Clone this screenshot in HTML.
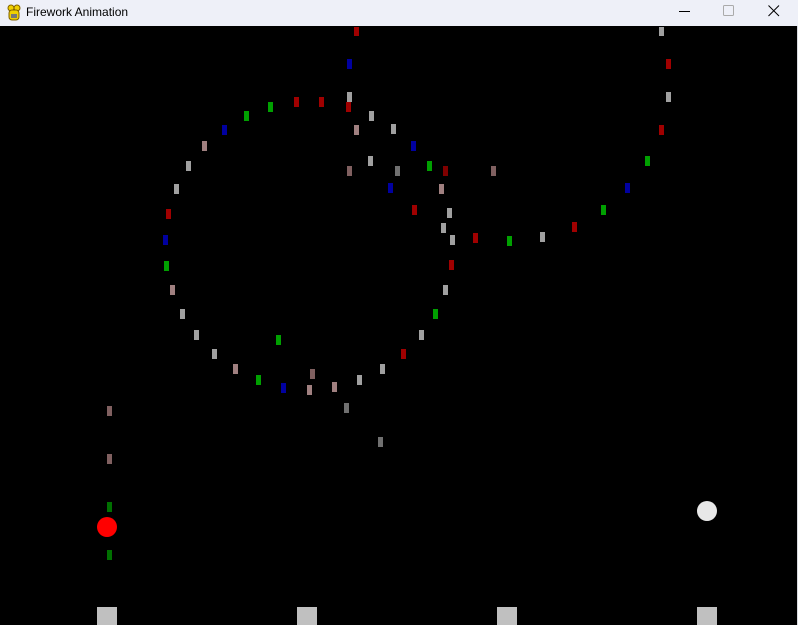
<!DOCTYPE html>
<html><head><meta charset="utf-8"><style>
*{margin:0;padding:0;box-sizing:border-box}
body{width:798px;height:625px;overflow:hidden;background:#000;position:relative;font-family:"Segoe UI","Liberation Sans",sans-serif}
#tb{position:absolute;left:0;top:0;width:798px;height:26px;background:#eef0f8}
#tb .t{position:absolute;left:26px;top:5px;font-size:12px;color:#000}
#cv{position:absolute;left:0;top:26px;width:797px;height:599px;background:#000}
#edge{position:absolute;left:797px;top:26px;width:1px;height:599px;background:#d8dae0}
p{position:absolute;width:5px;height:10px}
.r{background:#a00000}.g{background:#00a000}.b{background:#0000a0}.y{background:#a0a0a0}.k{background:#a08080}.d{background:#707070}.m{background:#806060}
.sq{position:absolute;top:607px;width:20px;height:18px;background:#c0c0c0}
</style></head><body>
<div id="tb">
<svg style="position:absolute;left:6px;top:4px" width="16" height="18" viewBox="0 0 16 18"><circle cx="5" cy="4" r="3" fill="#f0d000" stroke="#806000" stroke-width="1"/><circle cx="11" cy="4" r="3" fill="#f0d000" stroke="#806000" stroke-width="1"/><rect x="3" y="6" width="10" height="10" rx="3" fill="#f0d000" stroke="#806000"/><rect x="5" y="10" width="6" height="4" fill="#777"/></svg>
<span class="t">Firework Animation</span>
<svg style="position:absolute;left:679px;top:5px" width="12" height="12"><line x1="0" y1="6.5" x2="11" y2="6.5" stroke="#000"/></svg>
<svg style="position:absolute;left:723px;top:5px" width="12" height="12"><rect x="0.5" y="0.5" width="10" height="10" rx="1" fill="none" stroke="#aaa"/></svg>
<svg style="position:absolute;left:768px;top:5px" width="12" height="12"><path d="M0.5 0.5L11 11M11 0.5L0.5 11" stroke="#000"/></svg>
</div>
<div id="cv"></div><div id="edge"></div>
<p class="r" style="left:354px;top:27px;height:9px"></p>
<p class="b" style="left:347px;top:59px"></p>
<p class="y" style="left:347px;top:92px"></p>
<p class="r" style="left:346px;top:102px"></p>
<p class="r" style="left:319px;top:97px"></p>
<p class="r" style="left:294px;top:97px"></p>
<p class="g" style="left:268px;top:102px"></p>
<p class="g" style="left:244px;top:111px"></p>
<p class="b" style="left:222px;top:125px"></p>
<p class="k" style="left:202px;top:141px"></p>
<p class="y" style="left:186px;top:161px"></p>
<p class="y" style="left:174px;top:184px"></p>
<p class="r" style="left:166px;top:209px"></p>
<p class="b" style="left:163px;top:235px"></p>
<p class="g" style="left:164px;top:261px"></p>
<p class="k" style="left:170px;top:285px"></p>
<p class="y" style="left:180px;top:309px"></p>
<p class="y" style="left:194px;top:330px"></p>
<p class="y" style="left:212px;top:349px"></p>
<p class="k" style="left:233px;top:364px"></p>
<p class="g" style="left:256px;top:375px"></p>
<p class="b" style="left:281px;top:383px"></p>
<p class="k" style="left:307px;top:385px"></p>
<p class="m" style="left:310px;top:369px"></p>
<p class="k" style="left:332px;top:382px"></p>
<p class="y" style="left:357px;top:375px"></p>
<p class="y" style="left:380px;top:364px"></p>
<p class="r" style="left:401px;top:349px"></p>
<p class="y" style="left:419px;top:330px"></p>
<p class="g" style="left:433px;top:309px"></p>
<p class="y" style="left:443px;top:285px"></p>
<p class="r" style="left:449px;top:260px"></p>
<p class="y" style="left:450px;top:235px"></p>
<p class="y" style="left:441px;top:223px"></p>
<p class="y" style="left:447px;top:208px"></p>
<p class="r" style="left:412px;top:205px"></p>
<p class="k" style="left:439px;top:184px"></p>
<p class="r" style="left:443px;top:166px;background:#800000"></p>
<p class="g" style="left:427px;top:161px"></p>
<p class="b" style="left:411px;top:141px"></p>
<p class="d" style="left:395px;top:166px"></p>
<p class="b" style="left:388px;top:183px"></p>
<p class="y" style="left:368px;top:156px"></p>
<p class="m" style="left:347px;top:166px"></p>
<p class="k" style="left:354px;top:125px"></p>
<p class="y" style="left:369px;top:111px"></p>
<p class="y" style="left:391px;top:124px"></p>
<p class="m" style="left:491px;top:166px"></p>
<p class="r" style="left:473px;top:233px"></p>
<p class="g" style="left:507px;top:236px"></p>
<p class="y" style="left:540px;top:232px"></p>
<p class="r" style="left:572px;top:222px"></p>
<p class="g" style="left:601px;top:205px"></p>
<p class="b" style="left:625px;top:183px"></p>
<p class="g" style="left:645px;top:156px"></p>
<p class="r" style="left:659px;top:125px"></p>
<p class="y" style="left:666px;top:92px"></p>
<p class="r" style="left:666px;top:59px"></p>
<p class="y" style="left:659px;top:27px;height:9px"></p>
<p class="g" style="left:276px;top:335px"></p>
<p class="d" style="left:344px;top:403px"></p>
<p class="d" style="left:378px;top:437px"></p>
<p class="m" style="left:107px;top:406px"></p>
<p class="m" style="left:107px;top:454px"></p>
<p class="g" style="left:107px;top:502px;background:#007000"></p>
<p class="g" style="left:107px;top:550px;background:#007000"></p>
<div style="position:absolute;left:97px;top:517px;width:20px;height:20px;border-radius:50%;background:#ff0000"></div>
<div style="position:absolute;left:697px;top:501px;width:20px;height:20px;border-radius:50%;background:#e8e8e8"></div>
<div class="sq" style="left:97px"></div>
<div class="sq" style="left:297px"></div>
<div class="sq" style="left:497px"></div>
<div class="sq" style="left:697px"></div>
</body></html>
